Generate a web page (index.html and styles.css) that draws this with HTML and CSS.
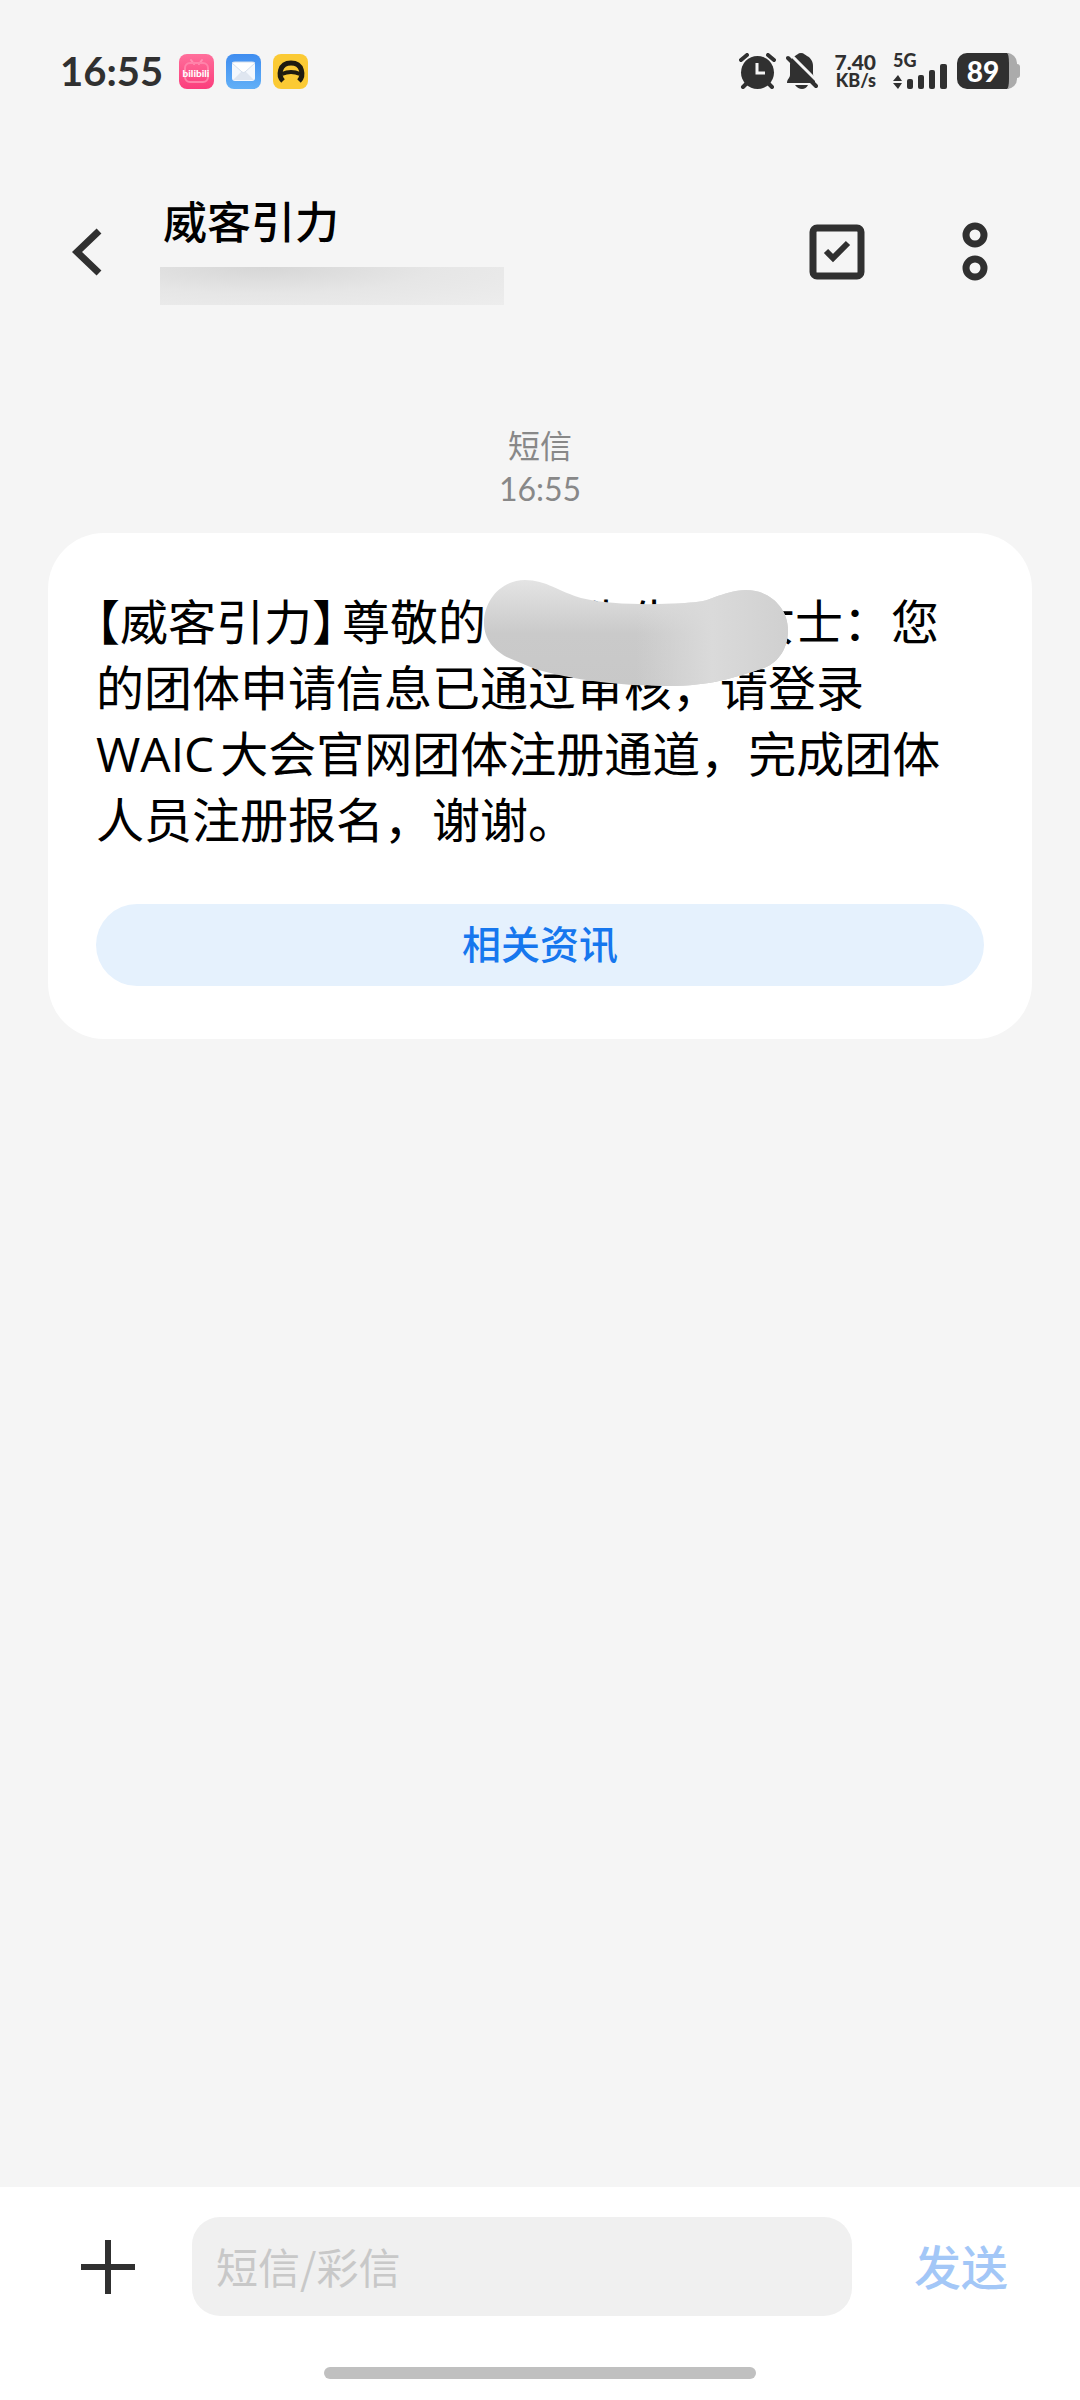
FILE: index.html
```html
<!DOCTYPE html>
<html lang="zh-CN">
<head>
  <meta charset="UTF-8">
  <meta name="viewport" content="width=device-width, initial-scale=1">
  <title>威客引力</title>
  <link rel="stylesheet" href="styles.css">
</head>
<body>
<div class="page">
  <!-- 状态栏 -->
  <div class="status">
    <span class="clock">16:55</span>
    <div class="apps">
      <svg width="35" height="35" viewBox="0 0 35 35">
        <defs>
          <linearGradient id="pink" x1="0" y1="0" x2="0" y2="1">
            <stop offset="0" stop-color="#ff6f9b"/>
            <stop offset="1" stop-color="#fb3d7c"/>
          </linearGradient>
        </defs>
        <rect width="35" height="35" rx="8" fill="url(#pink)"/>
        <path d="M12 6l3 4M23 6l-3 4" stroke="#ff8fb2" stroke-width="2" stroke-linecap="round"/>
        <rect x="6" y="9" width="23" height="19" rx="5" fill="none" stroke="#ff82a9" stroke-width="2"/>
        <text class="logo-text" x="17" y="23" text-anchor="middle">bilibili</text>
      </svg>
      <svg width="35" height="35" viewBox="0 0 35 35">
        <defs>
          <linearGradient id="blue" x1="0" y1="0" x2="0" y2="1">
            <stop offset="0" stop-color="#3f8df0"/>
            <stop offset="1" stop-color="#62b0f7"/>
          </linearGradient>
        </defs>
        <rect width="35" height="35" rx="8" fill="url(#blue)"/>
        <rect x="6" y="8" width="23" height="19" rx="3" fill="#f4f8fd"/>
        <path d="M7 26l8-8h5l8 8z" fill="#dfe6f0"/>
        <path d="M6 9l10 9q2 1 3 0l10-9q-1-1-3-1H9q-2 0-3 1z" fill="#fff" stroke="#d5dfec" stroke-width="1"/>
      </svg>
      <svg width="35" height="35" viewBox="0 0 35 35">
        <rect width="35" height="35" rx="8" fill="#fbca34"/>
        <path d="M10 27C5 22 6 9 18 9s13 13 8 18" fill="none" stroke="#1f1b10" stroke-width="5"/>
        <path d="M9 20q9-4 18 0" fill="none" stroke="#1f1b10" stroke-width="4"/>
      </svg>
    </div>
    <div class="indicators">
      <svg class="alarm" width="37" height="36" viewBox="0 0 37 36">
        <circle cx="18.5" cy="19.5" r="16.5" fill="#303030"/>
        <path d="M2 7l6-5M29 2l6 5M9 29l-5 5M28 29l5 5" stroke="#303030" stroke-width="4" stroke-linecap="round"/>
        <path d="M18 10v10h8" fill="none" stroke="#f5f5f5" stroke-width="3"/>
      </svg>
      <svg class="bell" width="32" height="36" viewBox="0 0 32 36">
        <path d="M15 0c-3 0-4 2-6 3-4 2-5 6-5 10v9c0 3-3 4-3 8h28v-5c-2-2-2-3-2-6v-6c0-4-2-8-6-10-2-1-3-3-6-3z" fill="#303030"/>
        <path d="M9 32h13q-2 4-6 4t-7-4z" fill="#303030"/>
        <path d="M4 1l30 30" stroke="#f5f5f5" stroke-width="3"/>
        <path d="M2 5l28 28" stroke="#303030" stroke-width="4" stroke-linecap="round"/>
      </svg>
      <div class="speed">
        <span class="rate">7.40</span>
        <span class="unit">KB/s</span>
      </div>
      <svg class="signal" width="54" height="36" viewBox="0 0 54 36">
        <text class="net" x="0" y="14">5G</text>
        <path d="M0 28l5-6 4 6zM0 30h9l-4 6z" fill="#303030"/>
        <rect x="14" y="26" width="6" height="10" rx="2" fill="#303030"/>
        <rect x="25" y="22" width="6" height="14" rx="2" fill="#303030"/>
        <rect x="36" y="17" width="6" height="19" rx="2" fill="#303030"/>
        <rect x="47" y="11" width="7" height="25" rx="2" fill="#303030"/>
      </svg>
      <div class="battery">
        <span class="level">89</span>
        <span class="nub"></span>
      </div>
    </div>
  </div>

  <!-- 标题栏 -->
  <header class="header">
    <button class="icon-btn back" type="button" aria-label="返回">
      <svg width="30" height="48" viewBox="0 0 30 48">
        <path d="M27 3L5 24l22 21" fill="none" stroke="#303030" stroke-width="7"/>
      </svg>
    </button>
    <div class="contact">
      <h1>威客引力</h1>
      <div class="number"></div>
    </div>
    <button class="icon-btn" type="button" aria-label="选择">
      <svg width="56" height="56" viewBox="0 0 56 56">
        <rect x="4" y="4" width="48" height="48" rx="4" fill="none" stroke="#303030" stroke-width="7"/>
        <path d="M17 27l7 7 15-15" fill="none" stroke="#303030" stroke-width="6"/>
      </svg>
    </button>
    <button class="icon-btn more" type="button" aria-label="更多">
      <svg width="26" height="60" viewBox="0 0 26 60">
        <circle cx="13" cy="13" r="9" fill="none" stroke="#303030" stroke-width="7"/>
        <circle cx="13" cy="46" r="9" fill="none" stroke="#303030" stroke-width="7"/>
      </svg>
    </button>
  </header>

  <!-- 短信内容 -->
  <main class="thread">
    <div class="stamp">
      <p>短信</p>
      <p>16:55</p>
    </div>
    <div class="card">
      <p class="message"><span class="bracket">【</span>威客引力<span class="bracket close">】</span>尊敬的<span class="masked">先生/<svg class="smear" width="305" height="107" viewBox="0 0 305 107">
          <defs>
            <linearGradient id="fade" x1="0" y1="0" x2="0" y2="1">
              <stop offset="0" stop-color="#e4e4e4"/>
              <stop offset="0.5" stop-color="#cacaca"/>
              <stop offset="1" stop-color="#c8c8c8"/>
            </linearGradient>
            <linearGradient id="shine" x1="0" y1="0" x2="1" y2="0">
              <stop offset="0.5" stop-color="#dadada" stop-opacity="0"/>
              <stop offset="0.75" stop-color="#dadada"/>
              <stop offset="1" stop-color="#d0d0d0"/>
            </linearGradient>
            <path id="blob" d="M0 43C0 19 18 0 41 0C62 0 76 12 97 18C125 25 170 25 201 23C215 22 222 21 231 17C240 14 250 10 262 10C286 10 304 28 304 50C304 68 295 82 280 88C250 98 225 106 185 106C150 106 100 103 51 89L25 78C10 71 0 59 0 43Z"/>
          </defs>
          <use href="#blob" fill="url(#fade)"/>
          <use href="#blob" fill="url(#shine)"/>
        </svg></span>女士：您<br>的团体申请信息已通过审核，请登录<br>WAIC大会官网团体注册通道，完成团体<br>人员注册报名，谢谢。</p>
      <button class="related" type="button">相关资讯</button>
    </div>
  </main>

  <!-- 输入栏 -->
  <footer class="footer">
    <form class="compose">
      <button class="icon-btn plus" type="button" aria-label="添加">
        <svg width="54" height="54" viewBox="0 0 54 54">
          <path d="M0 27h54M27 0v54" stroke="#303030" stroke-width="6"/>
        </svg>
      </button>
      <input class="text" type="text" placeholder="短信/彩信" aria-label="短信/彩信">
      <button class="send" type="button">发送</button>
    </form>
    <div class="home"></div>
  </footer>
</div>
</body>
</html>
```

FILE: styles.css
```css
body {
  margin: 0;
  background-color: #F5F5F5;
  color: #000;
  font-family: "Noto Sans CJK SC", sans-serif;
}

h1, p {
  margin: 0;
}

svg {
  display: block;
}

button, input {
  border: none;
  padding: 0;
  background: none;
  font-family: inherit;
}

.page {
  display: flex;
  flex-direction: column;
  min-height: 100vh;
}

/* 状态栏 */
.status {
  display: flex;
  align-items: center;
  height: 36px;
  padding: 53px 60px 0;
  color: #303030;
  font-family: Lato, "Noto Sans CJK SC", sans-serif;
  font-weight: bold;
}

.clock {
  font-size: 40px;
  line-height: 36px;
}

.apps {
  display: flex;
  gap: 12px;
  margin-left: 16px;
}

.logo-text {
  fill: #FFF;
  font-size: 10px;
  font-weight: 900;
}

.indicators {
  display: flex;
  gap: 10px;
  margin-left: auto;
}

.speed {
  display: flex;
  flex-direction: column;
  align-items: flex-end;
  width: 48px;
  margin-right: 7px;
}

.rate {
  font-size: 21px;
  line-height: 17px;
  font-weight: 900;
}

.unit {
  font-size: 18px;
  line-height: 20px;
  font-weight: 900;
}

.signal {
  overflow: visible;
}

.net {
  fill: #303030;
  font-size: 18px;
  font-weight: 900;
}

.battery {
  display: flex;
  align-items: center;
}

.level {
  width: 52px;
  height: 36px;
  border-right: 8px solid #ABABAB;
  border-radius: 10px;
  background-color: #303030;
  color: #FFF;
  font-size: 28px;
  line-height: 36px;
  font-weight: 900;
  text-align: center;
}

.nub {
  width: 3px;
  height: 14px;
  border-radius: 0 3px 3px 0;
  background-color: #ABABAB;
}

/* 标题栏 */
.header {
  display: flex;
  align-items: center;
  padding: 102px 92px 0 72px;
}

.icon-btn {
  flex: none;
}

.contact {
  flex: 1;
  margin-left: 58px;
  padding-bottom: 8px;
}

.contact h1 {
  padding-left: 3px;
  font-size: 44px;
  line-height: 58px;
  font-weight: 500;
}

.number {
  max-width: 344px;
  height: 38px;
  margin-top: 18px;
  background: radial-gradient(ellipse at 30% 0, #D6D6D6, #E6E6E6 50%, #EDEDED);
}

.more {
  margin-left: 97px;
}

/* 短信内容 */
.thread {
  flex: 1;
  padding: 111px 48px 0;
}

.stamp {
  color: #888;
  font-family: Lato, "Noto Sans CJK SC", sans-serif;
  font-size: 32px;
  line-height: 43px;
  text-align: center;
}

.card {
  margin-top: 23px;
  padding: 56px 48px 53px;
  border-radius: 56px;
  background-color: #FFF;
}

.message {
  font-family: "Open Sans", "Noto Sans CJK SC", sans-serif;
  font-size: 48px;
  line-height: 66px;
  text-autospace: normal;
}

.bracket {
  font-feature-settings: "halt";
}

.close {
  margin-right: 6px;
}

.masked {
  display: inline-block;
  position: relative;
  box-sizing: border-box;
  width: 261px;
  height: 66px;
  padding-left: 96px;
  vertical-align: top;
}

.smear {
  position: absolute;
  left: -2px;
  top: -9px;
}

.related {
  display: block;
  width: 100%;
  height: 82px;
  margin-top: 51px;
  padding-bottom: 6px;
  border-radius: 41px;
  background-color: #E5F1FD;
  color: #1677EE;
  font-size: 39px;
  font-weight: 500;
}

/* 输入栏 */
.footer {
  padding: 30px 0 21px;
  background-color: #FFF;
}

.compose {
  display: flex;
  align-items: center;
  padding: 0 72px 0 81px;
}

.text {
  flex: 1;
  box-sizing: border-box;
  min-width: 0;
  height: 99px;
  margin: 0 62px 0 57px;
  padding: 0 24px 2px;
  border-radius: 28px;
  background-color: #F0F0F0;
  font-size: 42px;
}

.text::placeholder {
  color: #C8C8C8;
}

.send {
  padding-bottom: 4px;
  color: #A3C7F7;
  font-size: 47px;
  font-weight: 500;
}

.home {
  width: 40%;
  height: 12px;
  margin: 51px auto 0;
  border-radius: 6px;
  background-color: #C0C0C0;
}
```
